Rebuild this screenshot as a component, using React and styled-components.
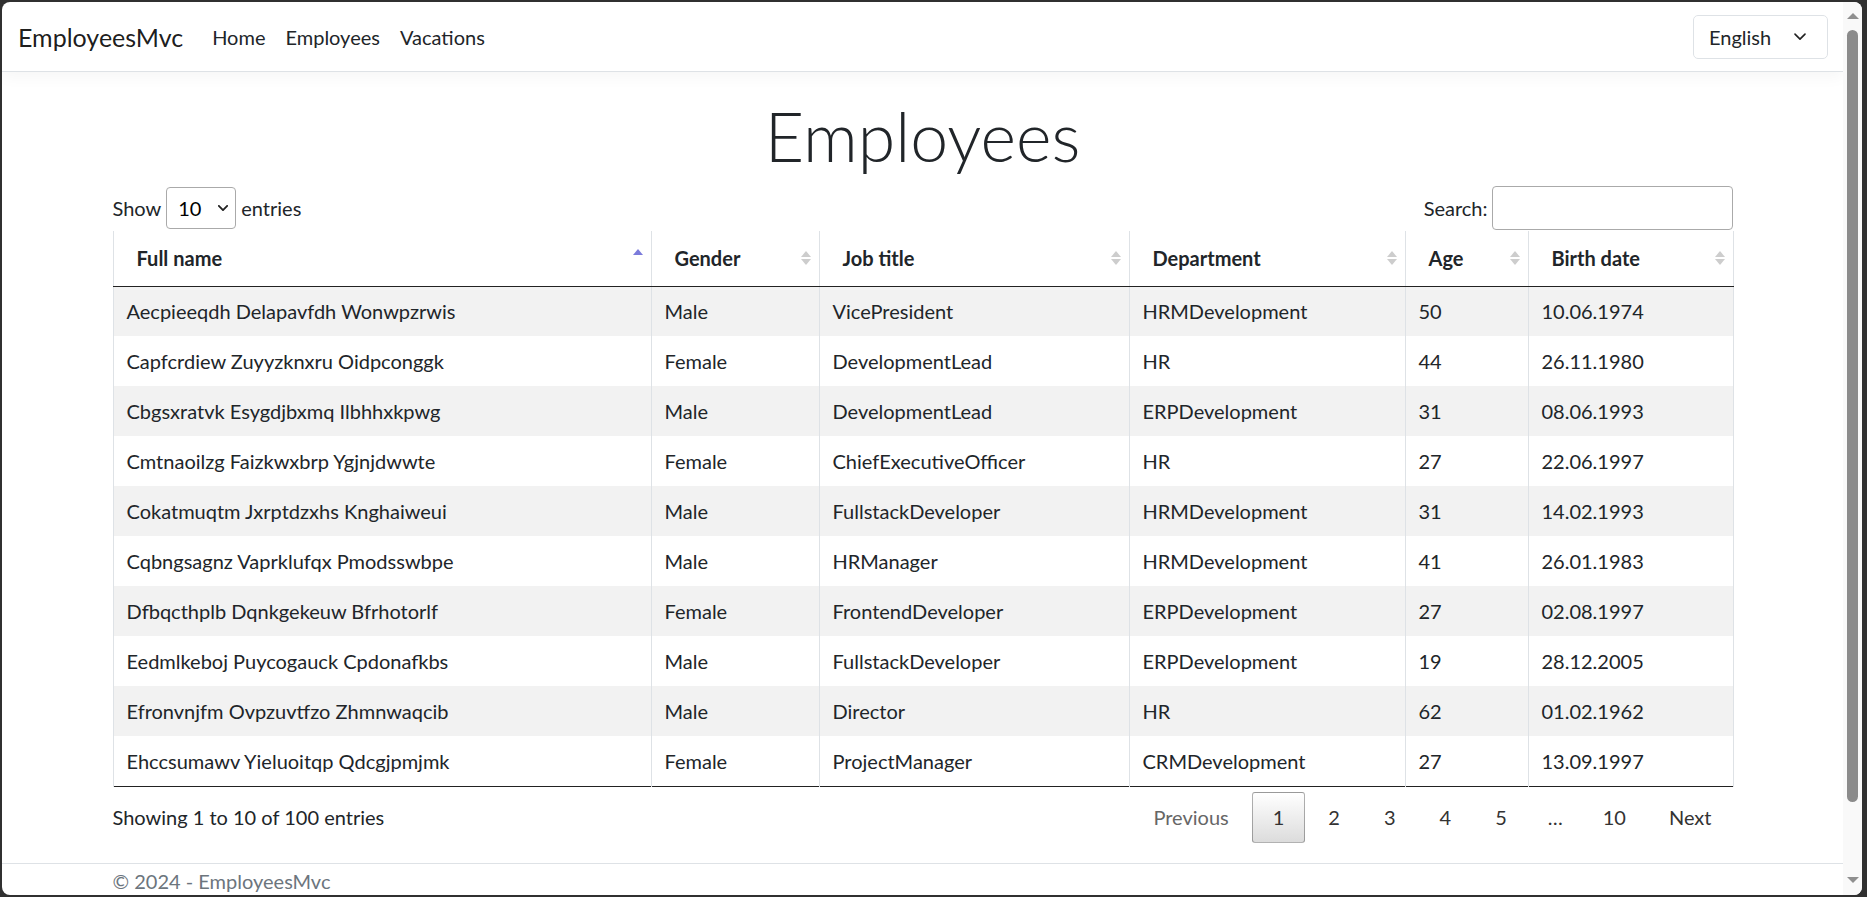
import React from 'react';
import styled, { createGlobalStyle } from 'styled-components';

const FONT = 'Lato, "Segoe UI", "Liberation Sans", sans-serif';

const GlobalStyle = createGlobalStyle`
  html, body {
    margin: 0;
    padding: 0;
  }
  body {
    background: #303030;
    font-family: ${FONT};
    color: #212529;
    overflow: hidden;
  }
  * {
    box-sizing: border-box;
  }
`;

const Frame = styled.div`
  width: 1867px;
  height: 897px;
  padding: 2px 5px 2px 2px;
  background: #303030;
`;

const Window = styled.div`
  display: flex;
  height: 100%;
  background: #fff;
  border-radius: 8px;
  overflow: hidden;
`;

const Page = styled.div`
  flex: 1;
  min-width: 0;
  display: flex;
  flex-direction: column;
  overflow: hidden;
`;

// navbar
const Navbar = styled.nav`
  flex: none;
  height: 70px;
  display: flex;
  align-items: center;
  padding: 0 15px 0 16px;
  border-bottom: 1px solid #dee2e6;
  box-shadow: 0 5px 15px rgba(0, 0, 0, 0.04);
`;

const Brand = styled.a`
  font-size: 25px;
  color: rgba(0, 0, 0, 0.9);
  margin-right: 19px;
`;

const NavLink = styled.a`
  font-size: 20px;
  padding: 0 10px;
  color: #212529;
`;

const LangSelect = styled.div`
  margin-left: auto;
  width: 135px;
  height: 44px;
  display: flex;
  align-items: center;
  justify-content: space-between;
  padding: 0 21px 0 15px;
  border: 1px solid #dee2e6;
  border-radius: 5px;
  font-size: 20px;
`;

// main content
const Container = styled.div`
  width: 100%;
  max-width: 1650px;
  margin: 0 auto;
  padding: 0 15px;
`;

const Title = styled.h1`
  margin: 22px 0 8px;
  text-align: center;
  font-size: 68px;
  font-weight: 300;
  line-height: 84px;
`;

const Controls = styled.div`
  height: 44px;
  margin-bottom: 1px;
  display: flex;
  align-items: center;
  justify-content: space-between;
  font-size: 20px;
`;

const LengthLabel = styled.label`
  display: flex;
  align-items: center;
  gap: 5px;
`;

const PageSize = styled.div`
  width: 70px;
  height: 42px;
  display: flex;
  align-items: center;
  justify-content: space-between;
  padding: 0 7px 0 11px;
  border: 1px solid #aaa;
  border-radius: 4px;
  color: #000;
`;

const SearchLabel = styled.label`
  display: flex;
  align-items: center;
  gap: 4px;
`;

const SearchInput = styled.div`
  width: 241px;
  height: 44px;
  border: 1px solid #aaa;
  border-radius: 4px;
`;

const Table = styled.table`
  width: 100%;
  table-layout: fixed;
  border-collapse: collapse;
  font-size: 20px;
  border-bottom: 1px solid #222;
`;

const Th = styled.th`
  height: 55px;
  padding: 0 8px 0 23px;
  text-align: left;
  font-weight: 700;
  border-left: 1px solid #dee2e6;
  border-right: 1px solid #dee2e6;
  border-bottom: 1px solid #222;
`;

const HeadInner = styled.div`
  display: flex;
  align-items: center;
  justify-content: space-between;
`;

const SortIcon = styled.span`
  display: flex;
  flex-direction: column;
  gap: 2px;
  margin-top: ${(p) => (p.$active ? '-5px' : '0')};
`;

const Tri = styled.span`
  width: 0;
  height: 0;
  border-left: 5px solid transparent;
  border-right: 5px solid transparent;
  ${(p) =>
    p.$down
      ? `border-top: 6px solid ${p.$color};`
      : `border-bottom: 6px solid ${p.$color};`}
`;

const Tr = styled.tr`
  height: 50px;
  background: ${(p) => (p.$odd ? '#f2f2f2' : '#fff')};
`;

const Td = styled.td`
  padding: 0 13px;
  border-left: 1px solid #dee2e6;
  border-right: 1px solid #dee2e6;
  white-space: nowrap;
`;

const Bottom = styled.div`
  margin-top: 5px;
  height: 51px;
  display: flex;
  align-items: center;
  justify-content: space-between;
  font-size: 20px;
`;

const Paging = styled.div`
  display: flex;
  align-items: center;
`;

const PageBtn = styled.span`
  min-width: 30px;
  height: 51px;
  line-height: 49px;
  padding: 0 ${(p) => (p.$tight ? '19px' : '20px')};
  margin-left: 2px;
  text-align: center;
  border: 1px solid ${(p) => (p.$current ? 'rgba(0,0,0,0.3)' : 'transparent')};
  border-radius: 3px;
  color: ${(p) => (p.$disabled ? '#666' : '#333')};
  background: ${(p) =>
    p.$current ? 'linear-gradient(to bottom, #fff 0%, #dcdcdc 100%)' : 'transparent'};
`;

const Ellipsis = styled.span`
  padding: 0 18px;
  margin-left: 2px;
  color: #333;
`;

const Footer = styled.footer`
  margin-top: 20px;
  border-top: 1px solid #dee2e6;
  padding-top: 2px;
  line-height: 30px;
  font-size: 20px;
  color: #6c757d;
  white-space: nowrap;
`;

// fake window scrollbar
const Scrollbar = styled.div`
  flex: none;
  width: 19px;
  background: #f9f9f9;
  display: flex;
  flex-direction: column;
  align-items: center;
  padding-top: 11px;
`;

const Arrow = styled.span`
  width: 0;
  height: 0;
  border-left: 6px solid transparent;
  border-right: 6px solid transparent;
  ${(p) => (p.$down ? 'border-top: 6px solid #8f8f8f;' : 'border-bottom: 6px solid #8f8f8f;')}
`;

const Thumb = styled.div`
  width: 11px;
  height: 772px;
  margin: 11px 0 75px;
  border-radius: 6px;
  background: #8b8b8b;
`;

const Chevron = ({ size = 12, weight = 1.6 }) => (
  <svg width={size} height={size * 0.6} viewBox="0 0 12 7" fill="none">
    <path d="M1 1 L6 6 L11 1" stroke="#222" strokeWidth={weight} strokeLinecap="round" strokeLinejoin="round" />
  </svg>
);

const columns = [
  { title: 'Full name', width: 538, active: true },
  { title: 'Gender', width: 168 },
  { title: 'Job title', width: 310 },
  { title: 'Department', width: 276 },
  { title: 'Age', width: 123 },
  { title: 'Birth date', width: 205 },
];

const rows = [
  ['Aecpieeqdh Delapavfdh Wonwpzrwis', 'Male', 'VicePresident', 'HRMDevelopment', '50', '10.06.1974'],
  ['Capfcrdiew Zuyyzknxru Oidpconggk', 'Female', 'DevelopmentLead', 'HR', '44', '26.11.1980'],
  ['Cbgsxratvk Esygdjbxmq Ilbhhxkpwg', 'Male', 'DevelopmentLead', 'ERPDevelopment', '31', '08.06.1993'],
  ['Cmtnaoilzg Faizkwxbrp Ygjnjdwwte', 'Female', 'ChiefExecutiveOfficer', 'HR', '27', '22.06.1997'],
  ['Cokatmuqtm Jxrptdzxhs Knghaiweui', 'Male', 'FullstackDeveloper', 'HRMDevelopment', '31', '14.02.1993'],
  ['Cqbngsagnz Vaprklufqx Pmodsswbpe', 'Male', 'HRManager', 'HRMDevelopment', '41', '26.01.1983'],
  ['Dfbqcthplb Dqnkgekeuw Bfrhotorlf', 'Female', 'FrontendDeveloper', 'ERPDevelopment', '27', '02.08.1997'],
  ['Eedmlkeboj Puycogauck Cpdonafkbs', 'Male', 'FullstackDeveloper', 'ERPDevelopment', '19', '28.12.2005'],
  ['Efronvnjfm Ovpzuvtfzo Zhmnwaqcib', 'Male', 'Director', 'HR', '62', '01.02.1962'],
  ['Ehccsumawv Yieluoitqp Qdcgjpmjmk', 'Female', 'ProjectManager', 'CRMDevelopment', '27', '13.09.1997'],
];

export default function App() {
  return (
    <Frame>
      <GlobalStyle />
      <Window>
        <Page>
          <Navbar>
            <Brand>EmployeesMvc</Brand>
            <NavLink>Home</NavLink>
            <NavLink>Employees</NavLink>
            <NavLink>Vacations</NavLink>
            <LangSelect>
              English
              <Chevron size={12} weight={1.6} />
            </LangSelect>
          </Navbar>

          <Container>
            <Title>Employees</Title>
            <Controls>
              <LengthLabel>
                Show
                <PageSize>
                  10
                  <Chevron size={10} weight={2.2} />
                </PageSize>
                entries
              </LengthLabel>
              <SearchLabel>
                Search:
                <SearchInput />
              </SearchLabel>
            </Controls>

            <Table>
              <colgroup>
                {columns.map((c) => (
                  <col key={c.title} style={{ width: c.width }} />
                ))}
              </colgroup>
              <thead>
                <tr>
                  {columns.map((c) => (
                    <Th key={c.title}>
                      <HeadInner>
                        {c.title}
                        <SortIcon $active={c.active}>
                          <Tri $color={c.active ? '#7b7bdb' : '#cdcdcd'} />
                          <Tri $down $color={c.active ? 'transparent' : '#cdcdcd'} />
                        </SortIcon>
                      </HeadInner>
                    </Th>
                  ))}
                </tr>
              </thead>
              <tbody>
                {rows.map((r, i) => (
                  <Tr key={r[0]} $odd={i % 2 === 0}>
                    {r.map((cell, j) => (
                      <Td key={j}>{cell}</Td>
                    ))}
                  </Tr>
                ))}
              </tbody>
            </Table>

            <Bottom>
              <span>Showing 1 to 10 of 100 entries</span>
              <Paging>
                <PageBtn $disabled>Previous</PageBtn>
                <PageBtn $current>1</PageBtn>
                <PageBtn>2</PageBtn>
                <PageBtn>3</PageBtn>
                <PageBtn>4</PageBtn>
                <PageBtn>5</PageBtn>
                <Ellipsis>…</Ellipsis>
                <PageBtn $tight>10</PageBtn>
                <PageBtn>Next</PageBtn>
              </Paging>
            </Bottom>
          </Container>

          <Footer>
            <Container>© 2024 - EmployeesMvc</Container>
          </Footer>
        </Page>
        <Scrollbar>
          <Arrow />
          <Thumb />
          <Arrow $down />
        </Scrollbar>
      </Window>
    </Frame>
  );
}
